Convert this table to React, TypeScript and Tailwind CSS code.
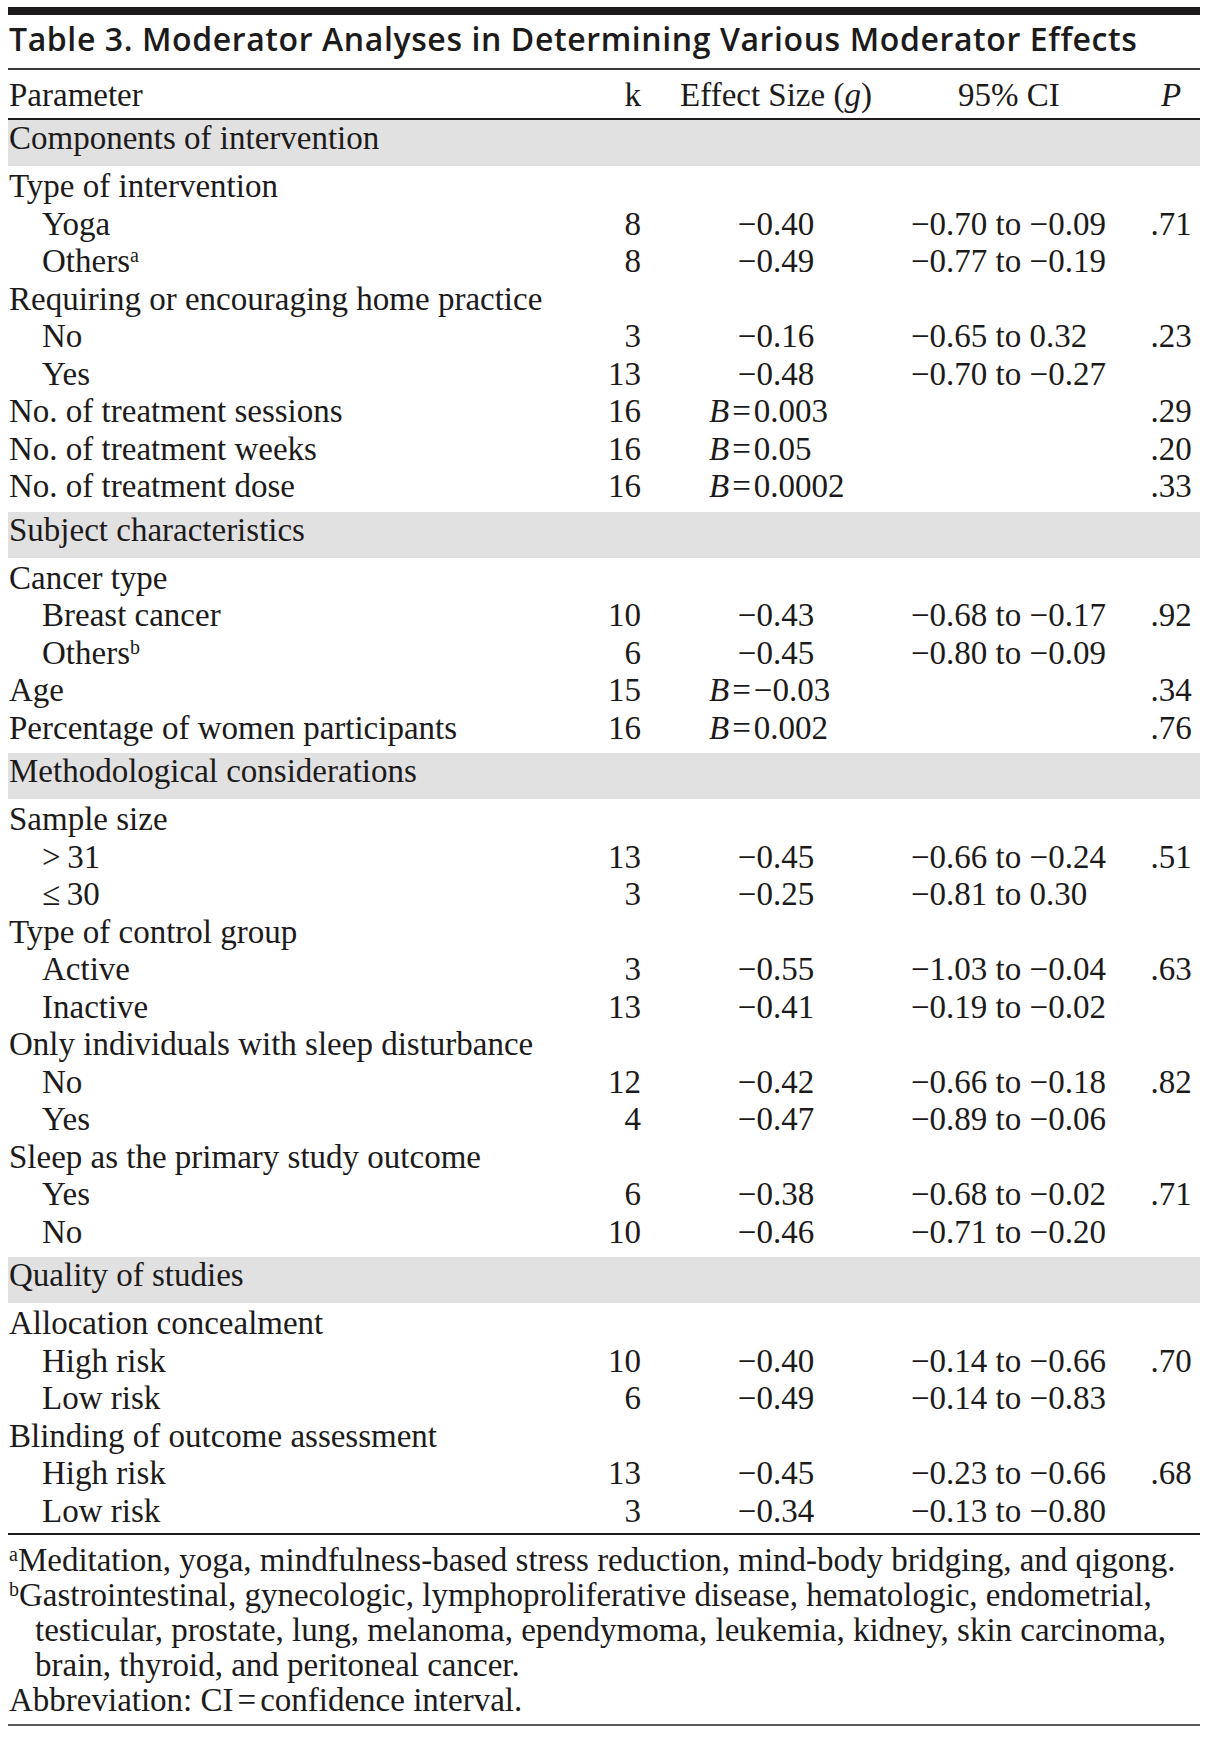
import React from "react";

type Row =
  | { kind: "band"; label: string }
  | {
      kind: "row";
      label: React.ReactNode;
      indent?: boolean;
      k?: string;
      eff?: string;
      b?: string;
      ci?: string;
      p?: string;
    };

const M = "\u2212";

const rows: Row[] = [
  { kind: "band", label: "Components of intervention" },
  { kind: "row", label: "Type of intervention" },
  { kind: "row", label: "Yoga", indent: true, k: "8", eff: `${M}0.40`, ci: `${M}0.70 to ${M}0.09`, p: ".71" },
  { kind: "row", label: <>Others<sup className="text-[20px]">a</sup></>, indent: true, k: "8", eff: `${M}0.49`, ci: `${M}0.77 to ${M}0.19` },
  { kind: "row", label: "Requiring or encouraging home practice" },
  { kind: "row", label: "No", indent: true, k: "3", eff: `${M}0.16`, ci: `${M}0.65 to 0.32`, p: ".23" },
  { kind: "row", label: "Yes", indent: true, k: "13", eff: `${M}0.48`, ci: `${M}0.70 to ${M}0.27` },
  { kind: "row", label: "No. of treatment sessions", k: "16", b: "0.003", p: ".29" },
  { kind: "row", label: "No. of treatment weeks", k: "16", b: "0.05", p: ".20" },
  { kind: "row", label: "No. of treatment dose", k: "16", b: "0.0002", p: ".33" },
  { kind: "band", label: "Subject characteristics" },
  { kind: "row", label: "Cancer type" },
  { kind: "row", label: "Breast cancer", indent: true, k: "10", eff: `${M}0.43`, ci: `${M}0.68 to ${M}0.17`, p: ".92" },
  { kind: "row", label: <>Others<sup className="text-[20px]">b</sup></>, indent: true, k: "6", eff: `${M}0.45`, ci: `${M}0.80 to ${M}0.09` },
  { kind: "row", label: "Age", k: "15", b: `${M}0.03`, p: ".34" },
  { kind: "row", label: "Percentage of women participants", k: "16", b: "0.002", p: ".76" },
  { kind: "band", label: "Methodological considerations" },
  { kind: "row", label: "Sample size" },
  { kind: "row", label: ">\u200931", indent: true, k: "13", eff: `${M}0.45`, ci: `${M}0.66 to ${M}0.24`, p: ".51" },
  { kind: "row", label: "\u2264\u200930", indent: true, k: "3", eff: `${M}0.25`, ci: `${M}0.81 to 0.30` },
  { kind: "row", label: "Type of control group" },
  { kind: "row", label: "Active", indent: true, k: "3", eff: `${M}0.55`, ci: `${M}1.03 to ${M}0.04`, p: ".63" },
  { kind: "row", label: "Inactive", indent: true, k: "13", eff: `${M}0.41`, ci: `${M}0.19 to ${M}0.02` },
  { kind: "row", label: "Only individuals with sleep disturbance" },
  { kind: "row", label: "No", indent: true, k: "12", eff: `${M}0.42`, ci: `${M}0.66 to ${M}0.18`, p: ".82" },
  { kind: "row", label: "Yes", indent: true, k: "4", eff: `${M}0.47`, ci: `${M}0.89 to ${M}0.06` },
  { kind: "row", label: "Sleep as the primary study outcome" },
  { kind: "row", label: "Yes", indent: true, k: "6", eff: `${M}0.38`, ci: `${M}0.68 to ${M}0.02`, p: ".71" },
  { kind: "row", label: "No", indent: true, k: "10", eff: `${M}0.46`, ci: `${M}0.71 to ${M}0.20` },
  { kind: "band", label: "Quality of studies" },
  { kind: "row", label: "Allocation concealment" },
  { kind: "row", label: "High risk", indent: true, k: "10", eff: `${M}0.40`, ci: `${M}0.14 to ${M}0.66`, p: ".70" },
  { kind: "row", label: "Low risk", indent: true, k: "6", eff: `${M}0.49`, ci: `${M}0.14 to ${M}0.83` },
  { kind: "row", label: "Blinding of outcome assessment" },
  { kind: "row", label: "High risk", indent: true, k: "13", eff: `${M}0.45`, ci: `${M}0.23 to ${M}0.66`, p: ".68" },
  { kind: "row", label: "Low risk", indent: true, k: "3", eff: `${M}0.34`, ci: `${M}0.13 to ${M}0.80` },
];

const grid = "grid grid-cols-[592px_41px_270px_235px_50px]";

export default function App() {
  return (
    <div className="w-[1208px] bg-white px-[8px] pt-[7px] pb-[7px] text-[#1c1a1a]">
      {/* top rule + title */}
      <div className="h-[8px] bg-[#1c1a1a]" />
      <h1 className="whitespace-nowrap pt-[8px] pb-[13px] pl-px font-['Open_Sans',sans-serif] text-[32px] leading-[32px] font-semibold tracking-[0.6px]">
        Table 3. Moderator Analyses in Determining Various Moderator Effects
      </h1>
      <div className="h-[2px] bg-[#3a3a3a]" />

      <div className="font-['Liberation_Serif',serif] text-[33px] leading-[32px]">
        {/* header */}
        <div className={`${grid} pt-[9px] pb-[7px]`}>
          <div className="pl-px">Parameter</div>
          <div className="text-right">k</div>
          <div className="text-center">
            Effect Size (<i>g</i>)
          </div>
          <div className="pl-[47px]">95% CI</div>
          <div className="text-center">
            <i>P</i>
          </div>
        </div>
        <div className="h-[2px] bg-[#1c1a1a]" />

        {rows.map((r, i) =>
          r.kind === "band" ? (
            <div
              key={i}
              className={`h-[46px] bg-[#e1e1e1] pl-px pt-[2px] ${i === 0 ? "mb-[4px]" : "my-[4px]"}`}
            >
              {r.label}
            </div>
          ) : (
            <div key={i} className={`${grid} whitespace-nowrap pb-[5.5px]`}>
              <div className={r.indent ? "pl-[34px]" : "pl-px"}>{r.label}</div>
              <div className="text-right">{r.k}</div>
              {r.b ? (
                <div className="pl-[68px]">
                  <i>B</i>
                  <span className="mx-[3px]">=</span>
                  {r.b}
                </div>
              ) : (
                <div className="text-center">{r.eff}</div>
              )}
              <div>{r.ci}</div>
              <div className="text-center">{r.p}</div>
            </div>
          )
        )}
        <div className="mt-[1px] h-[2px] bg-[#1c1a1a]" />

        {/* footnotes */}
        <div className="whitespace-nowrap pt-[8px] leading-[35px]">
          <div className="pl-px">
            <sup className="text-[20px]">a</sup>Meditation, yoga, mindfulness-based stress reduction, mind-body bridging, and qigong.
          </div>
          <div className="pl-px">
            <sup className="text-[20px]">b</sup>Gastrointestinal, gynecologic, lymphoproliferative disease, hematologic, endometrial,
          </div>
          <div className="pl-[27px]">
            testicular, prostate, lung, melanoma, ependymoma, leukemia, kidney, skin carcinoma,
          </div>
          <div className="pl-[27px]">brain, thyroid, and peritoneal cancer.</div>
          <div className="pl-px">
            Abbreviation: CI<span className="mx-[4px]">=</span>confidence interval.
          </div>
        </div>
        <div className="mt-[6px] h-[2px] bg-[#5a5a5a]" />
      </div>
    </div>
  );
}
